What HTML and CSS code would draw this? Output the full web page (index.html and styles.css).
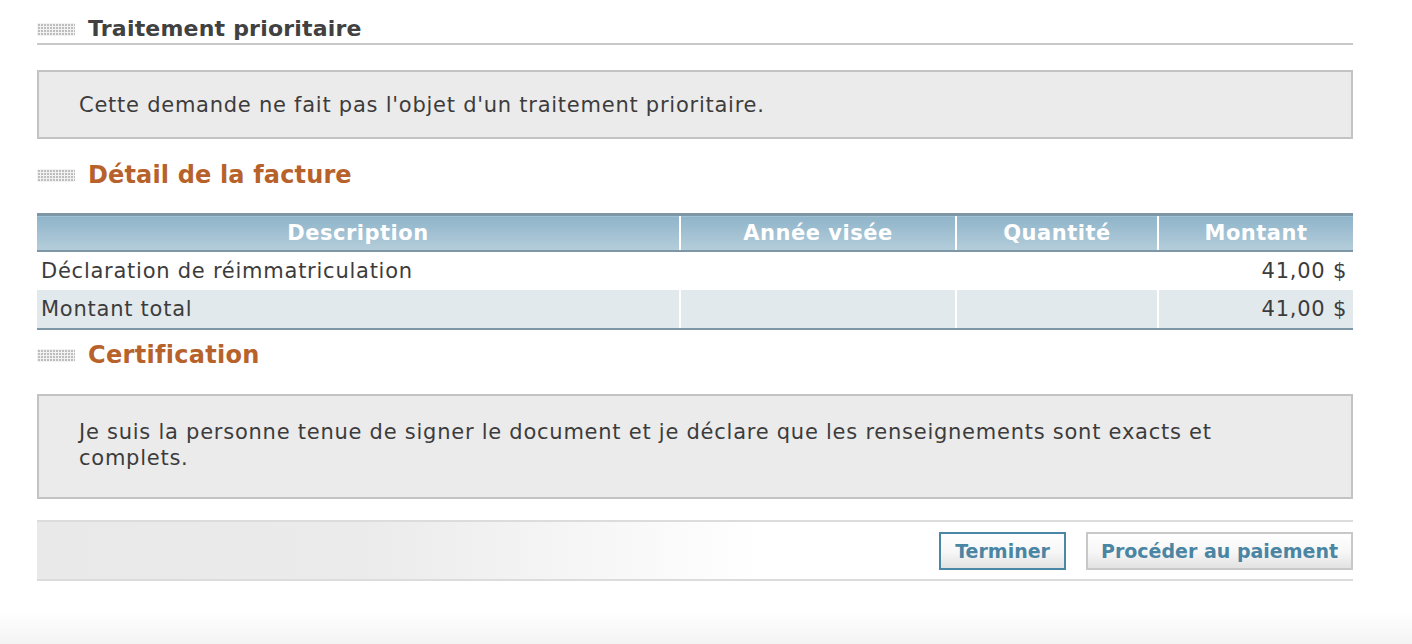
FILE: index.html
```html
<!DOCTYPE html>
<html lang="fr">
<head>
<meta charset="utf-8">
<title>Détail de la facture</title>
<link rel="stylesheet" href="styles.css">
</head>
<body>
<main class="page">
  <h2 class="section-title section-title--dark"><span class="dots"></span>Traitement prioritaire</h2>
  <div class="note">
    <p>Cette demande ne fait pas l'objet d'un traitement prioritaire.</p>
  </div>

  <h2 class="section-title section-title--plain"><span class="dots"></span>Détail de la facture</h2>
  <table class="invoice">
    <thead>
      <tr>
        <th class="c-desc">Description</th>
        <th class="c-year">Année visée</th>
        <th class="c-qty">Quantité</th>
        <th class="c-amt">Montant</th>
      </tr>
    </thead>
    <tbody>
      <tr>
        <td>Déclaration de réimmatriculation</td>
        <td></td>
        <td></td>
        <td class="num">41,00 $</td>
      </tr>
      <tr class="total">
        <td>Montant total</td>
        <td></td>
        <td></td>
        <td class="num">41,00 $</td>
      </tr>
    </tbody>
  </table>

  <h2 class="section-title section-title--plain section-title--cert"><span class="dots"></span>Certification</h2>
  <div class="note note--tall">
    <p>Je suis la personne tenue de signer le document et je déclare que les renseignements sont exacts et complets.</p>
  </div>

  <div class="actions">
    <button class="btn btn--primary" type="button">Terminer</button>
    <button class="btn" type="button">Procéder au paiement</button>
  </div>
</main>
</body>
</html>
```

FILE: styles.css
```css
html, body {
  margin: 0;
  padding: 0;
}

body {
  min-height: 644px;
  font-family: "DejaVu Sans", Verdana, sans-serif;
  color: #3c3c3c;
  background: linear-gradient(to bottom, #ffffff 0, #ffffff 612px, #f3f3f3 644px);
}

.page {
  width: 1316px;
  margin-left: 37px;
  padding-top: 15px;
}

/* section headings with the dotted bullet */
.section-title {
  display: flex;
  align-items: center;
  margin: 0;
  font-size: 24px;
  font-weight: bold;
  line-height: 28px;
  color: #b8622b;
}

.section-title--dark {
  font-size: 22px;
  color: #414141;
  letter-spacing: 0.2px;
  padding-bottom: 0;
  border-bottom: 2px solid #c8c8c8;
}

.section-title--plain {
  margin-top: 22px;
  letter-spacing: 0.15px;
}

.section-title--cert {
  margin-top: 11px;
  letter-spacing: 0.3px;
}

.dots {
  flex: none;
  width: 38px;
  height: 13px;
  margin-right: 13px;
  background-color: #bdbdbd;
  background-image:
    linear-gradient(90deg, #f2f2f2 1px, transparent 1px),
    linear-gradient(#f2f2f2 1px, transparent 1px);
  background-size: 3px 3px;
}

/* grey message panels */
.note {
  margin-top: 25px;
  background: #ecebec;
  border: 2px solid #c3c3c3;
  padding: 20px 40px 19px;
}

.note p {
  margin: 0;
  font-size: 21px;
  letter-spacing: 0.75px;
  line-height: 26px;
}

.note--tall {
  padding: 23px 40px 26px;
}

/* invoice table */
.invoice {
  width: 100%;
  margin-top: 24px;
  border-collapse: collapse;
  font-size: 21px;
  letter-spacing: 0.75px;
}

.invoice th {
  height: 34px;
  padding: 0;
  color: #ffffff;
  font-weight: bold;
  letter-spacing: 0.5px;
  text-align: center;
  vertical-align: middle;
  background: linear-gradient(to bottom, #8fb4c9, #b4cdda);
  border-top: 3px solid #7d97a6;
  border-bottom: 2px solid #7d97a6;
  border-left: 2px solid #ffffff;
}

.invoice th:first-child,
.invoice td:first-child {
  border-left: none;
}

.c-desc { width: 642px; }
.c-year { width: 274px; }
.c-qty { width: 200px; }

.invoice td {
  height: 38px;
  padding: 0 6px 0 4px;
  border-left: 2px solid #ffffff;
}

.invoice .num {
  text-align: right;
}

.invoice .total td {
  background: #e2e9ed;
  border-bottom: 2px solid #7d97a6;
}

/* action bar */
.actions {
  display: flex;
  justify-content: flex-end;
  gap: 20px;
  margin-top: 21px;
  padding: 10px 0 9px;
  border-top: 2px solid #dcdcdc;
  border-bottom: 2px solid #dcdcdc;
  background: linear-gradient(to right, #e9e9e9 0, #ebebeb 25%, #ffffff 55%);
}

.btn {
  height: 38px;
  padding: 0 13px;
  font-family: "DejaVu Sans", Verdana, sans-serif;
  font-size: 19px;
  font-weight: bold;
  color: #4a85a3;
  background: linear-gradient(to bottom, #ffffff 0, #f6f6f6 55%, #e2e2e2 100%);
  border: 2px solid #c8c8c8;
  cursor: pointer;
}

.btn--primary {
  padding: 0 14px;
  border-color: #4a86a5;
}
```
